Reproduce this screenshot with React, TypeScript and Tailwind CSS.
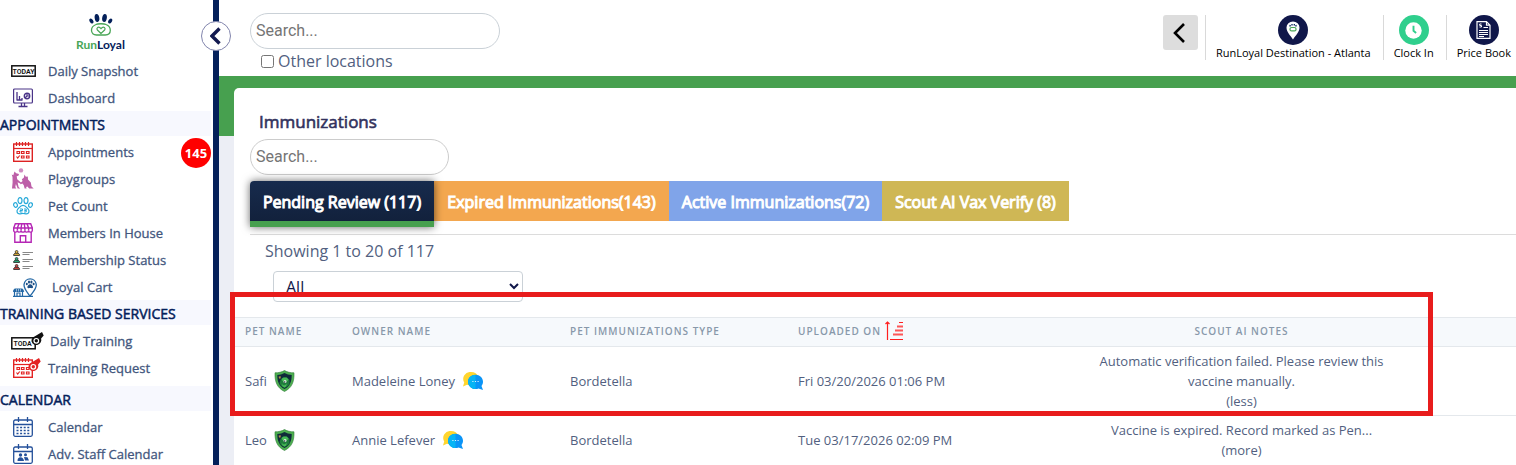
import type { ReactNode } from 'react';

const NAVY = '#04205a';

/* ---------- icons ---------- */

const PawLogo = () => (
  <svg width="24" height="23" viewBox="0 0 24 23" fill="none">
    <g fill={NAVY}>
      <ellipse cx="2.400" cy="7" rx="1.700" ry="2.700" transform="rotate(-32 2.400 7)" />
      <ellipse cx="8" cy="4" rx="2.300" ry="4" transform="rotate(-10 8 4)" />
      <ellipse cx="15.500" cy="4" rx="2.300" ry="4" transform="rotate(10 15.500 4)" />
      <ellipse cx="21.200" cy="7" rx="1.700" ry="2.700" transform="rotate(32 21.200 7)" />
    </g>
    <path
      d="M7 10.500c1.400-1 8.400-1 10 0 2.500 1 4.300 3 4.300 5.800 0 3-2 4.700-5 4.700H7.500c-3 0-5-1.800-5-4.700 0-2.800 2-4.800 4.500-5.800z"
      stroke="#4aa657"
      strokeWidth="1.300"
    />
    <path
      d="M12 19.500l-3.600-3.500c-1.400-1.700.8-4 2.600-2.300l1 1 1-1c1.800-1.700 4 .6 2.600 2.300L12 19.500z"
      stroke="#4aa657"
      strokeWidth="1.200"
    />
  </svg>
);

const TodayIcon = () => (
  <svg width="25" height="12" viewBox="0 0 25 12">
    <rect x=".8" y=".8" width="23.400" height="10.400" fill="#fff" stroke="#111" strokeWidth="1.500" />
    <text x="12.500" y="8.500" fontSize="7" fontWeight="600" fontFamily="Roboto, sans-serif" textAnchor="middle" fill="#111">
      TODAY
    </text>
  </svg>
);

const DashboardIcon = () => (
  <svg width="20" height="20" viewBox="0 0 20 20" fill="none" stroke="#4a3488">
    <rect x=".6" y="1" width="18.800" height="14" rx="1" strokeWidth="1.200" />
    <path d="M4 4v8M6.500 8v4M9 10v2M3.500 12h6M8.500 15v3M11.500 15v3M5.500 18.500h9" strokeWidth="1.300" />
    <circle cx="14" cy="8" r="2.700" strokeWidth="1.400" />
    <path d="M14 5.300V8h2.700M12 10l2-2" strokeWidth="1.200" />
  </svg>
);

const RedCalendar = () => (
  <>
    <rect x=".7" y="2" width="18.600" height="17.300" strokeWidth="1.400" />
    <path d="M1 6.500h18" strokeWidth="1.200" />
    <path d="M3.500 0v4M6.500 0v4M9.500 0v4M12.500 0v4M15.500 0v4" strokeWidth="1.200" />
    <path d="M4 9.500h2.500v2H4zM8.500 9.500H11v2H8.500zM13.500 9.500H16v2h-2.500zM8.500 14H11v2H8.500zM13.500 14H16v2h-2.500z" strokeWidth="1.200" />
    <path d="M3.500 14.500l1.200 1.500 2-2.500" strokeWidth="1.200" />
  </>
);

const AppointmentsIcon = () => (
  <svg width="20" height="20" viewBox="0 0 20 20" fill="none" stroke="#dd2222">
    <RedCalendar />
  </svg>
);

const PlaygroupsIcon = () => (
  <svg width="23" height="22" viewBox="0 0 23 22" fill="#bd5fa8">
    <circle cx="10" cy="2.400" r="2.200" fill="#d08cc0" />
    <path d="M3.500 3.500l1.700 1.800 2.800.7-.6 1.700-1.700.6.500 3 4 3.500-.6 1-3-1.500 1 4.700 1.600 1.500H6.700l-1.800-4.500-.6 3 1 1.500H1l.6-6L1.500 9 .7 6.500l1.600.8z" />
    <path d="M13.500 6.500l1.300 2.200 2-.3.200 3 2.800 3 .7 4 2.200 2.100h-4.500l-1.800-2-1.300.5.500 1.500h-2l-.8-3.200-1.400-1.800-1.800.8-.4-1 2.400-2.400-.8-1.600 2-1.500z" />
  </svg>
);

const PetCountIcon = () => (
  <svg width="20" height="18" viewBox="0 0 20 18" fill="none" stroke="#26a9d9" strokeWidth="1.200">
    <ellipse cx="7" cy="3.600" rx="2" ry="3" />
    <ellipse cx="13" cy="3.600" rx="2" ry="3" />
    <ellipse cx="2.500" cy="8" rx="1.800" ry="2.300" transform="rotate(-20 2.500 8)" />
    <ellipse cx="17.500" cy="8" rx="1.800" ry="2.300" transform="rotate(20 17.500 8)" />
    <path d="M10 8.300c2.500 0 3.500 2 5 3.600 2 2.200.8 5-1.600 5-1.300 0-2-.4-3.400-.4s-2.100.4-3.400.4c-2.400 0-3.600-2.800-1.600-5 1.500-1.600 2.500-3.600 5-3.600z" />
    <path d="M7 12h2.500v1.500H7V15h2.500M11 12h2.200v3H11M11.300 13.500h1.900" strokeWidth="1" />
  </svg>
);

const StoreIcon = () => (
  <svg width="20" height="20" viewBox="0 0 20 20" fill="none" stroke="#b527b5" strokeWidth="1.400">
    <path d="M2.300.7h15.400L19.300 5v2.500c0 2.200-3.700 2.200-3.700 0 0 2.200-3.700 2.200-3.700 0 0 2.200-3.800 2.200-3.800 0 0 2.200-3.700 2.200-3.700 0 0 2.200-3.700 2.200-3.700 0V5z" />
    <path d="M.7 5h18.600M6 .7L4.400 5v2.500M8.800.7L8.100 5v2.500M11.200.7l.7 4.300v2.500M14 .7L15.600 5v2.500M1.800 9v10.300h16.400V9M7.300 19v-6.300h5.400V19" />
  </svg>
);

const MembershipIcon = () => (
  <svg width="20" height="20" viewBox="0 0 20 20">
    {['#e9b93f', '#27b07c', '#d8433f'].map((fill, i) => (
      <g key={fill} transform={`translate(0 ${i * 7})`}>
        <path d="M.6 5.400c0-1.700 1.200-2.300 3-2.300s3 .6 3 2.300z" fill={fill} stroke="#333" strokeWidth="1" />
        <circle cx="3.600" cy="1.900" r="1.400" fill={fill} stroke="#333" strokeWidth=".8" />
        <path d="M9.500 2.500H20M9.500 4.500h7" stroke="#888" strokeWidth="1.200" />
      </g>
    ))}
  </svg>
);

const LoyalCartIcon = () => (
  <svg width="24" height="20" viewBox="0 0 24 20" fill="none" stroke="#2468a5">
    <path d="M17 19.200c-2.600-4-6-7-6-11.500a6.200 6.600 0 0 1 12.300 0c0 4.500-3.700 7.500-6.300 11.500z" strokeWidth="1.300" />
    <g fill="#1d4f86" stroke="none">
      <ellipse cx="13.800" cy="7" rx="1" ry="1.300" />
      <ellipse cx="16" cy="5" rx="1.100" ry="1.500" />
      <ellipse cx="18.400" cy="5" rx="1.100" ry="1.500" />
      <ellipse cx="20.600" cy="7" rx="1" ry="1.300" />
      <path d="M17.200 7.200c1.600 0 3.200 2.200 2.800 3.400-.3 1-1.600.5-2.800.5s-2.500.5-2.800-.5c-.4-1.200 1.200-3.400 2.800-3.400z" />
    </g>
    <path d="M1.500 12h8l1.200 2.500H.3z" fill="#2468a5" strokeWidth="1" />
    <path d="M1.500 14v5M9.500 14v5M0 19.300h20M4 19v-3h3v3" strokeWidth="1.200" />
    <path d="M3.500 12v2.500M5.500 12v2.500M7.500 12v2.500" stroke="#fff" strokeWidth=".5" />
  </svg>
);

const Whistle = ({ color }: { color: string }) => (
  <>
    <path d="M0 9.500a5 5 0 0 1 3-5L10.500 0l1.700 3.400L9.600 6.500A5 5 0 1 1 0 9.500z" fill={color} stroke="none" />
    <circle cx="4.800" cy="8.800" r="2.300" fill="none" stroke="#fff" strokeWidth="1.200" />
  </>
);

const DailyTrainingIcon = () => (
  <svg width="33" height="18" viewBox="0 0 33 18">
    <rect x=".8" y="5.800" width="23.400" height="11" fill="#fff" stroke="#111" strokeWidth="1.500" />
    <text x="2.500" y="14" fontSize="7" fontWeight="600" fontFamily="Roboto, sans-serif" fill="#111">
      TODA
    </text>
    <g transform="translate(20.500 0)">
      <Whistle color="#111" />
    </g>
  </svg>
);

const TrainingRequestIcon = () => (
  <svg width="28" height="20" viewBox="0 0 28 20" fill="none" stroke="#e32424">
    <RedCalendar />
    <g transform="translate(15.500 0)">
      <Whistle color="#e32424" />
    </g>
  </svg>
);

const CalendarFrame = () => (
  <>
    <rect x=".7" y="3" width="18.600" height="16.300" rx="1.500" strokeWidth="1.300" />
    <path d="M1 7.500h18M5.500 0v5M14.500 0v5" strokeWidth="1.300" />
  </>
);

const CalendarIcon = () => (
  <svg width="20" height="20" viewBox="0 0 20 20" fill="none" stroke="#24509a">
    <CalendarFrame />
    <path d="M3.500 10.500h13M3.500 13.500h13M3.500 16.500h13" strokeWidth="1.500" strokeDasharray="2 1.600" />
  </svg>
);

const StaffCalendarIcon = () => (
  <svg width="20" height="20" viewBox="0 0 20 20" fill="none" stroke="#24509a">
    <CalendarFrame />
    <g fill="#24509a" stroke="none">
      <circle cx="7.500" cy="11" r="1.700" />
      <path d="M4.500 17c0-2.500 1-3.700 3-3.700s3 1.200 3.500 3.700z" />
      <circle cx="12.500" cy="10.800" r="1.500" />
      <path d="M11 13l3.500.3 1.500 3.200h-4z" />
    </g>
  </svg>
);

const ShieldIcon = () => (
  <svg width="21" height="22" viewBox="0 0 21 22">
    <path d="M10.500.5c2.700 1.700 6 2.300 9.500 2.300.3 9-2 15-9.500 18.700C3 17.800.7 11.800 1 2.800 4.500 2.800 7.800 2.200 10.500.5z" fill="#4cae4f" stroke="#317c3b" strokeWidth=".6" />
    <path d="M10.500 3c2.300 1.300 4.600 1.800 7.200 1.900 0 6.800-1.800 11.200-7.200 14.100C5.100 16.100 3.300 11.700 3.300 4.900 5.900 4.800 8.200 4.300 10.500 3z" fill="#0f2a3a" />
    <path d="M6.500 10l2-2.200 4.500-.3 2.500 2.500v3.500l-1.500 2.500-3.500 2-3.500-2-1.500-3z" fill="#1f7d3c" />
    <path d="M7.500 9l2-1.500h3l2 2-1 1.500h-5z" fill="#46b956" />
    <path d="M7.500 14l2.500 1.500 3-1.500-1 2.500-1.500 1-1.800-1z" fill="#46b956" />
    <circle cx="11" cy="11.500" r="1.500" fill="#e4f3e4" />
    <circle cx="10.700" cy="12" r=".7" fill="#10202c" />
    <path d="M4.500 6.800l2-.8.300 2.300-1.500.4z" fill="#b58a4a" />
  </svg>
);

const ChatIcon = () => (
  <svg width="20" height="18" viewBox="0 0 20 18">
    <path d="M7.800 0a7.800 6.800 0 0 1 7.500 5L7 13.500l-3-.7L0 14.500l1.200-4A7 7 0 0 1 7.800 0z" fill="#ffd52e" />
    <path d="M12.500 2.800c4.200 0 7.500 3 7.500 6.900 0 1.700-.6 3-1.500 4.200L20 18l-4.500-1.500a8.500 8.500 0 0 1-3 .5c-4.200 0-7.500-3.300-7.500-7.300s3.300-6.900 7.500-6.900z" fill="#0a94f7" />
    <path d="M12.500 2.800c-4.200 0-7.500 3-7.500 6.900s3.300 7.300 7.500 7.300z" fill="#06b4f4" />
    <path d="M9.300 9.500h1.200M11.900 9.500h1.200M14.500 9.500h1.200" stroke="#d8f0ff" strokeWidth="1" />
  </svg>
);

const SortIcon = () => (
  <svg width="19" height="20" viewBox="0 0 19 20" fill="none" stroke="#ff1f1f">
    <path d="M2.500 19V1M.5 3L2.500 1l2 2" strokeWidth="1.200" />
    <path d="M14 1.500h4M5 18.500h13" strokeWidth="1" />
    <path d="M12 5.500h6M10 9.500h8M8 13.500h10" strokeWidth="1.800" opacity=".75" />
  </svg>
);

const PinIcon = () => (
  <svg width="14" height="19" viewBox="0 0 14 19">
    <path d="M7 18.500C4.500 14.500.5 11 .5 6.500a6.500 6 0 0 1 13 0C13.500 11 9.500 14.500 7 18.500z" fill="#fff" />
    <path d="M3.800 5.500l.5-1.500M6 4.500V3M8.300 4.500V3M10.200 5.500L9.800 4" stroke={NAVY} strokeWidth="1.300" />
    <rect x="4" y="6.500" width="6" height="3.400" rx="1.500" fill="#fff" stroke="#4aa657" strokeWidth="1.200" />
  </svg>
);

const ClockIcon = () => (
  <svg width="17" height="17" viewBox="0 0 17 17">
    <circle cx="8.500" cy="8.500" r="8.200" fill="#fff" />
    <path d="M8.500 3.800v5l2.600 2.200" fill="none" stroke="#2fcf8d" strokeWidth="1.900" />
  </svg>
);

const PriceBookIcon = () => (
  <svg width="15" height="18" viewBox="0 0 15 18" fill="none" stroke="#fff">
    <path d="M1 .7h9.500L14 4.200v13.100H1zM10.500.7v3.500H14" strokeWidth="1.200" />
    <path d="M5.500 3H3.700v1.500h1.800V6H3.500M7.500 6.500H12M3 9.500h9M3 11.500h9M3 13.500h9M3 15.500h5" strokeWidth="1" />
  </svg>
);

/* ---------- sidebar ---------- */

interface NavItem {
  label: string;
  icon: ReactNode;
  badge?: number;
}

interface NavSection {
  title?: string;
  items: NavItem[];
}

const SECTIONS: NavSection[] = [
  {
    items: [
      { label: 'Daily Snapshot', icon: <TodayIcon /> },
      { label: 'Dashboard', icon: <DashboardIcon /> },
    ],
  },
  {
    title: 'APPOINTMENTS',
    items: [
      { label: 'Appointments', icon: <AppointmentsIcon />, badge: 145 },
      { label: 'Playgroups', icon: <PlaygroupsIcon /> },
      { label: 'Pet Count', icon: <PetCountIcon /> },
      { label: 'Members In House', icon: <StoreIcon /> },
      { label: 'Membership Status', icon: <MembershipIcon /> },
      { label: 'Loyal Cart', icon: <LoyalCartIcon /> },
    ],
  },
  {
    title: 'TRAINING BASED SERVICES',
    items: [
      { label: 'Daily Training', icon: <DailyTrainingIcon /> },
      { label: 'Training Request', icon: <TrainingRequestIcon /> },
    ],
  },
  {
    title: 'CALENDAR',
    items: [
      { label: 'Calendar', icon: <CalendarIcon /> },
      { label: 'Adv. Staff Calendar', icon: <StaffCalendarIcon /> },
    ],
  },
];

const WIDE_ICONS = ['Daily Snapshot', 'Daily Training', 'Playgroups'];

const Sidebar = () => (
  <aside className="relative z-10 w-[219px] shrink-0 border-r-[6px] border-[#04205a] bg-white pr-0.5">
    <div className="flex h-[57px] flex-col items-center pt-3.5 pr-2.5">
      <PawLogo />
      <span className="font-[Lato,sans-serif] text-[12px] leading-4 font-bold text-[#04205a]">
        <span className="text-[#4aa657]">Run</span>Loyal
      </span>
    </div>
    <nav>
      {SECTIONS.map((section, i) => (
        <div key={section.title ?? 'top'} className={i === 2 ? 'mb-[5px]' : ''}>
          {section.title && (
            <h2 className="mb-0.5 h-[25px] bg-[#f7f8fe] pt-0.5 text-[14px] leading-6 whitespace-nowrap text-[#04205a] [-webkit-text-stroke:0.5px]">
              {section.title}
            </h2>
          )}
          <ul>
            {section.items.map((item) => (
              <li key={item.label} className="flex h-[27px] items-center">
                <a href="#" className="flex items-center text-[13px] leading-5 text-[#42567d] [-webkit-text-stroke:0.3px]">
                  <span
                    className={`flex h-5 items-center ${
                      WIDE_ICONS.includes(item.label) ? 'ml-[11px] min-w-[37px]' : 'ml-[13px] min-w-[35px]'
                    } ${item.label === 'Loyal Cart' ? 'mr-1' : ''} ${item.label === 'Daily Training' ? 'mr-0.5' : ''}`}
                  >
                    {item.icon}
                  </span>
                  {item.label}
                </a>
                {item.badge && (
                  <span className="mt-0.5 ml-auto flex size-[30px] items-center justify-center rounded-full bg-[#ff0000] pt-0.5 text-[13px] font-bold text-white">
                    {item.badge}
                  </span>
                )}
              </li>
            ))}
          </ul>
        </div>
      ))}
    </nav>
    <button
      aria-label="Collapse menu"
      className="absolute top-[21px] -right-[18px] flex size-[30px] items-center justify-center rounded-full border border-[#8285ad] bg-white"
    >
      <svg width="12" height="18" viewBox="0 0 12 18" fill="none" stroke="#131a50" strokeWidth="3.400">
        <path d="M9.500 1.500L2 9l7.500 7.500" />
      </svg>
    </button>
  </aside>
);

/* ---------- header ---------- */

const ACTIONS = [
  { label: 'RunLoyal Destination - Atlanta', icon: <PinIcon />, color: 'bg-[#10174a]' },
  { label: 'Clock In', icon: <ClockIcon />, color: 'bg-[#2fcf8d]' },
  { label: 'Price Book', icon: <PriceBookIcon />, color: 'bg-[#10174a]' },
];

const Header = () => (
  <header className="flex h-[76px] shrink-0 items-start justify-between bg-white pl-[31px]">
    <div className="pt-[13px]">
      <input
        type="text"
        aria-label="Search"
        placeholder="Search..."
        className="block h-9 w-[250px] rounded-[18px] border border-[#cad1d7] px-[5px] pb-0.5 font-[Roboto,sans-serif] text-[16px] placeholder:text-[#757575]"
      />
      <label className="ml-[11px] flex items-center gap-1 text-[16px] leading-6 text-[#525f7f]">
        <input type="checkbox" className="size-[13px]" />
        Other locations
      </label>
    </div>
    <div className="flex pt-[15px]">
      <button aria-label="Back" className="mr-[7px] flex size-[35px] items-center justify-center rounded-[3px] bg-[#dddddd]">
        <svg width="14" height="20" viewBox="0 0 14 20" fill="none" stroke="#000" strokeWidth="2.600">
          <path d="M11 1L2 10l9 9" />
        </svg>
      </button>
      {ACTIONS.map((action) => (
        <button
          key={action.label}
          className="flex h-[45px] flex-col items-center border-l border-[#d9d9d9] pr-3 pl-2.5 text-[11px] leading-4 text-black last:pr-[5px]"
        >
          <span className={`flex size-[30px] shrink-0 items-center justify-center rounded-full ${action.color}`}>{action.icon}</span>
          {action.label}
        </button>
      ))}
    </div>
  </header>
);

/* ---------- immunizations ---------- */

const TABS = [
  { label: 'Expired Immunizations(143)', style: 'bg-[#f3a74f] w-[235px]' },
  { label: 'Active Immunizations(72)', style: 'bg-[#80a4e9] w-[213px]' },
  { label: 'Scout AI Vax Verify (8)', style: 'bg-[#cfb755] w-[187px]' },
];

const ROWS = [
  {
    pet: 'Safi',
    owner: 'Madeleine Loney',
    type: 'Bordetella',
    uploaded: 'Fri 03/20/2026 01:06 PM',
    note: 'Automatic verification failed. Please review this vaccine manually.',
    toggle: '(less)',
  },
  {
    pet: 'Leo',
    owner: 'Annie Lefever',
    type: 'Bordetella',
    uploaded: 'Tue 03/17/2026 02:09 PM',
    note: 'Vaccine is expired. Record marked as Pen...',
    toggle: '(more)',
  },
];

const ImmunizationTable = () => (
  <table className="w-full table-fixed border-collapse text-left text-[13px] leading-5 text-[#525f7f]">
    <colgroup>
      <col className="w-[107px]" />
      <col className="w-[218px]" />
      <col className="w-[228px]" />
      <col className="w-[303px]" />
      <col className="w-[303px]" />
      <col />
    </colgroup>
    <thead className="border-y border-[#e4e8ec] bg-[#f6f9fc] text-[10px] leading-4 tracking-widest text-[#8898aa]">
      <tr className="h-[29px]">
        <th className="pb-0.5 pl-[11px] font-semibold">PET NAME</th>
        <th className="pb-0.5 pl-[11px] font-semibold">OWNER NAME</th>
        <th className="pb-0.5 pl-[11px] font-semibold">PET IMMUNIZATIONS TYPE</th>
        <th className="pb-0.5 pl-[11px] font-semibold">
          <button className="flex items-center gap-1 tracking-widest">
            UPLOADED ON
            <SortIcon />
          </button>
        </th>
        <th className="pb-0.5 text-center font-semibold">SCOUT AI NOTES</th>
        <td />
      </tr>
    </thead>
    <tbody>
      {ROWS.map((row) => (
        <tr key={row.pet} className="border-b border-[#e4e8ec] last:border-b-0">
          <td className="pl-[11px]">
            <span className="flex items-center gap-[7px]">
              {row.pet}
              <ShieldIcon />
            </span>
          </td>
          <td className="pl-[11px]">
            <span className="flex items-center gap-2">
              {row.owner}
              <ChatIcon />
            </span>
          </td>
          <td className="pl-[11px]">{row.type}</td>
          <td className="pl-[11px]">{row.uploaded}</td>
          <td className="py-1 text-center">
            {row.note}
            <button className="mx-auto block">{row.toggle}</button>
          </td>
          <td />
        </tr>
      ))}
    </tbody>
  </table>
);

const Immunizations = () => (
  <section className="min-h-full rounded-tl-[5px] bg-white pt-[22px]">
    <h1 className="pl-[25px] text-[17px] leading-6 text-[#32325d] [-webkit-text-stroke:0.6px]">Immunizations</h1>
    <div className="pt-[5px] pl-4">
      <input
        type="text"
        aria-label="Search immunizations"
        placeholder="Search..."
        className="block h-9 w-[199px] rounded-[18px] border border-[#cccccc] px-[5px] pb-0.5 font-[Roboto,sans-serif] text-[16px] placeholder:text-[#757575]"
      />
      <div className="mt-1.5 flex h-[54px] items-start border-b border-[#dcdcdc] text-[16px] leading-6 whitespace-nowrap text-white [-webkit-text-stroke:1px]">
        <button className="relative h-[46px] w-[184px] rounded-tl-[4px] border-b-[6px] border-[#47a04f] bg-linear-to-b from-[#172b4d] to-[#12213c] pt-0.5 shadow-[0_0_8px_rgba(0,0,0,0.6)]">
          Pending Review (117)
        </button>
        {TABS.map((tab) => (
          <button key={tab.label} className={`h-10 pt-0.5 ${tab.style}`}>
            {tab.label}
          </button>
        ))}
      </div>
    </div>
    <p className="pt-1 pl-[31px] text-[16px] leading-6 text-[#525f7f]">Showing 1 to 20 of 117</p>
    <select
      aria-label="Filter by type"
      className="mt-2 ml-[39px] block h-[31px] w-[250px] rounded-[4px] border border-[#cad1d7] bg-white pl-2 text-[16px] text-[#10174a]"
    >
      <option>All</option>
    </select>
    <div className="relative mt-[15px]">
      <ImmunizationTable />
      {/* highlight around the header and the first record */}
      <div className="pointer-events-none absolute -top-[25px] -left-1 h-[124px] w-[1203px] border-[5px] border-[#e81c1c]" />
    </div>
  </section>
);

export default function App() {
  return (
    <div className="flex h-screen overflow-hidden bg-white font-['Open_Sans',sans-serif]">
      <Sidebar />
      <div className="flex min-w-0 flex-1 flex-col">
        <Header />
        <main className="min-h-0 flex-1 bg-[linear-gradient(#47a04f_60px,#eceef5_60px)] pt-3 pl-[15px]">
          <Immunizations />
        </main>
      </div>
    </div>
  );
}
